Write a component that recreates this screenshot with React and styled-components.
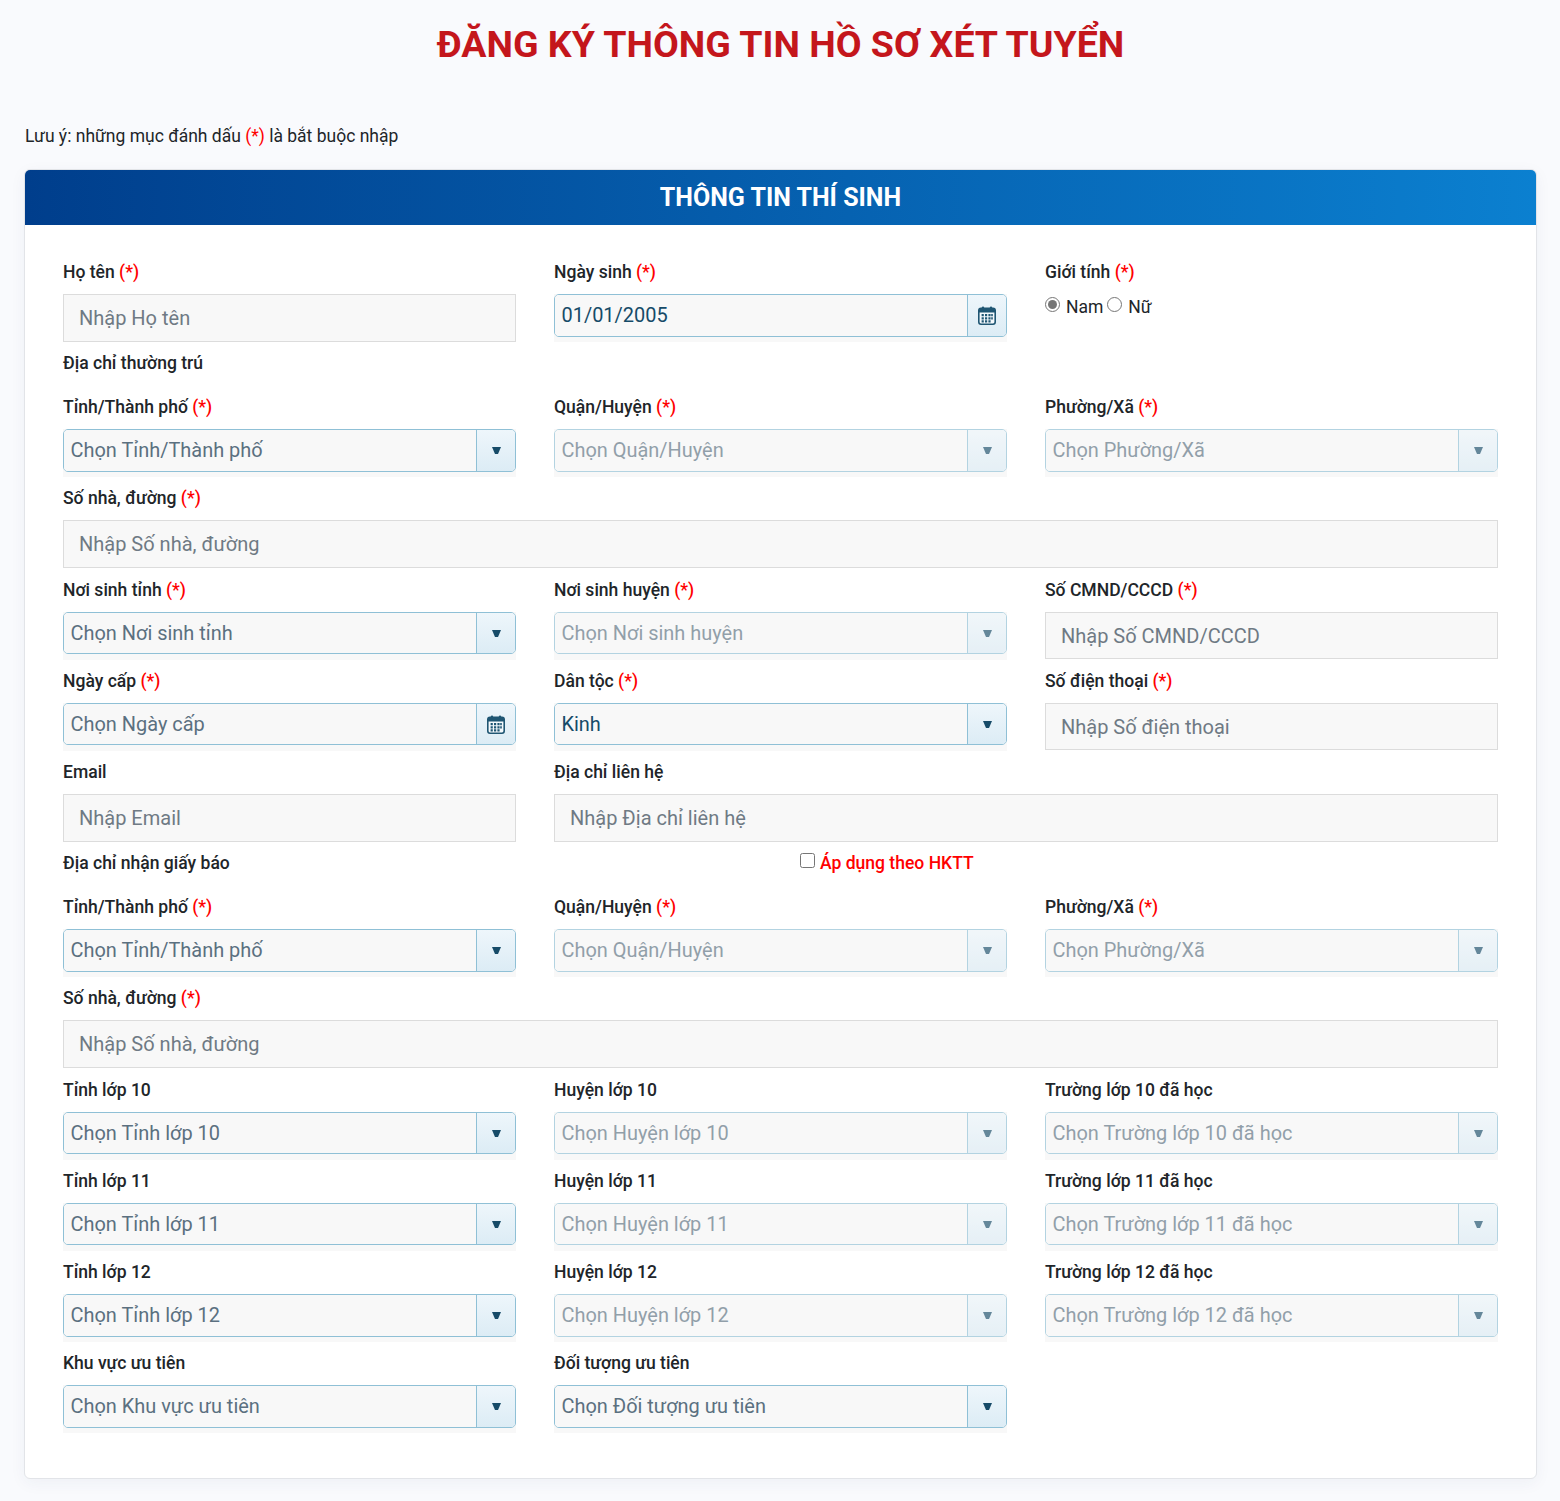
import React from "react";
import styled, { createGlobalStyle } from "styled-components";

const Global = createGlobalStyle`
  html, body { margin: 0; padding: 0; background: #f9fafd; }
  body { font-family: Roboto, "Noto Sans", sans-serif; color: #212529; }
  * { box-sizing: border-box; }
`;
const Page = styled.div`
  padding: 0 23px 21px 24px;
`;
const Title = styled.h1`
  margin: 0;
  padding-top: 19px;
  height: 122px;
  text-align: center;
  font-size: 37.5px;
  line-height: 50px;
  font-weight: 700;
  color: #c4161c;
`;
const Note = styled.p`
  margin: 0 0 19px 1px;
  height: 28px;
  font-size: 17.5px;
  line-height: 28px;
`;
const Req = styled.span`
  color: #f00;
`;
const Card = styled.section`
  background: #fff;
  border: 1px solid #e2e4e8;
  border-radius: 6px;
  box-shadow: 0 4px 16px rgba(40, 60, 100, 0.05);
  overflow: hidden;
`;
const CardHead = styled.h2`
  margin: 0;
  height: 55px;
  background: linear-gradient(90deg, #003e8c 0%, #0b80d0 100%);
  color: #fff;
  text-align: center;
  font-size: 25px;
  line-height: 56px;
  font-weight: 700;
`;
const Grid = styled.div`
  display: grid;
  grid-template-columns: repeat(3, 453px);
  column-gap: 38px;
  padding: 36px 38px 35px;
`;
const Field = styled.div`
  grid-column: span ${(p) => p.$span || 1};
  padding-bottom: ${(p) => (p.$wide ? 11 : 10)}px;
`;
const Label = styled.div`
  height: 22px;
  margin-bottom: 11px;
  font-size: 17.55px;
  line-height: 22px;
  font-weight: 500;
  white-space: nowrap;
`;
const Heading = styled.div`
  grid-column: span ${(p) => p.$span || 1};
  height: 44px;
  font-size: 17.55px;
  line-height: 22px;
  font-weight: 500;
  white-space: nowrap;
`;
const TextInput = styled.div`
  height: ${(p) => (p.$compact ? 47 : 48)}px;
  padding: 0 15px;
  background: #f8f8f8;
  border: 1px solid #dcdcdc;
  font-size: 20px;
  line-height: 46px;
  color: #6f7a84;
  white-space: nowrap;
`;
const Wrap = styled.div`
  height: 48px;
  background: #f8f8f8;
`;
const Combo = styled.div`
  display: flex;
  height: ${(p) => (p.$compact ? 42 : 43)}px;
  border: 1px solid #8fc0d6;
  border-radius: 5px;
  overflow: hidden;
  opacity: ${(p) => (p.$disabled ? 0.65 : 1)};
`;
const ComboText = styled.div`
  flex: 1;
  padding-left: 6.5px;
  background: #f8f8f8;
  font-size: 19.95px;
  line-height: 41px;
  color: ${(p) => (p.$value ? "#164b68" : "#5b7080")};
  white-space: nowrap;
`;
const ComboBtn = styled.div`
  display: flex;
  align-items: center;
  justify-content: center;
  width: 39px;
  border-left: 1px solid #8fc0d6;
  background: linear-gradient(180deg, #eef6fb 0%, #dcecf5 100%);
`;
const Options = styled.div`
  display: flex;
  align-items: center;
  height: 24px;
  padding-top: 2px;
  font-size: 17.5px;
  line-height: 22px;
`;
const Radio = styled.input`
  width: 15px;
  height: 15px;
  margin: 0 6px 6px 0;
  accent-color: #767676;
`;
const RadioText = styled.label`
  margin-right: 4px;
`;
const Apply = styled.label`
  grid-column: span 2;
  display: flex;
  align-items: flex-start;
  height: 44px;
  padding-left: 246px;
  color: #f00;
  font-size: 17.55px;
  line-height: 22px;
  font-weight: 500;
  white-space: nowrap;
`;
const Check = styled.input`
  width: 15px;
  height: 15px;
  margin: 1px 5px 0 0;
`;

const Arrow = () => (
  <svg width="9" height="7" viewBox="0 0 9 7"><path d="M0 0h9L6 7H3z" fill="#164b68" /></svg>
);
const CalendarIcon = () => (
  <svg width="18" height="19" viewBox="0 0 18 19">
    <rect x="0.8" y="2.2" width="16.4" height="16" rx="2.2" fill="#f4f9fc" stroke="#1f5673" strokeWidth="1.6" />
    <path d="M1 4a2 2 0 0 1 2-2h12a2 2 0 0 1 2 2v2.5H1z" fill="#1f5673" />
    <rect x="4" y="0.4" width="2" height="3.6" rx="0.8" fill="#1f5673" />
    <rect x="12" y="0.4" width="2" height="3.6" rx="0.8" fill="#1f5673" />
    <path d="M3.6 8h2.2v2.2H3.6zM7 8h2.2v2.2H7zM10.4 8h2.2v2.2h-2.2zM13.2 8h1.6v2.2h-1.6zM3.6 11.2h2.2v2.2H3.6zM7 11.2h2.2v2.2H7zM10.4 11.2h2.2v2.2h-2.2zM13.2 11.2h1.6v2.2h-1.6zM3.6 14.2h2.2v2.2H3.6zM7 14.2h2.2v2.2H7zM10.4 14.2h2.2v2.2h-2.2z" fill="#1f5673" />
  </svg>
);

const FieldLabel = ({ text, req }) => (
  <Label>{text}{req && <> <Req>(*)</Req></>}</Label>
);
const InputField = ({ label, req, span, wide, compact, placeholder }) => (
  <Field $span={span} $wide={wide}>
    <FieldLabel text={label} req={req} />
    <TextInput $compact={compact}>{placeholder}</TextInput>
  </Field>
);
const ComboField = ({ label, req, text, value, disabled, calendar, compact }) => (
  <Field>
    <FieldLabel text={label} req={req} />
    <Wrap>
      <Combo $disabled={disabled} $compact={compact}>
        <ComboText $value={value}>{text}</ComboText>
        <ComboBtn>{calendar ? <CalendarIcon /> : <Arrow />}</ComboBtn>
      </Combo>
    </Wrap>
  </Field>
);

const AddressRows = () => (
  <>
    <ComboField label="Tỉnh/Thành phố" req text="Chọn Tỉnh/Thành phố" />
    <ComboField label="Quận/Huyện" req text="Chọn Quận/Huyện" disabled />
    <ComboField label="Phường/Xã" req text="Chọn Phường/Xã" disabled />
    <InputField label="Số nhà, đường" req span={3} wide placeholder="Nhập Số nhà, đường" />
  </>
);
const SchoolRow = ({ n, compact }) => (
  <>
    <ComboField compact={compact} label={`Tỉnh lớp ${n}`} text={`Chọn Tỉnh lớp ${n}`} />
    <ComboField compact={compact} label={`Huyện lớp ${n}`} text={`Chọn Huyện lớp ${n}`} disabled />
    <ComboField compact={compact} label={`Trường lớp ${n} đã học`} text={`Chọn Trường lớp ${n} đã học`} disabled />
  </>
);

export default function App() {
  return (
    <Page>
      <Global />
      <Title>ĐĂNG KÝ THÔNG TIN HỒ SƠ XÉT TUYỂN</Title>
      <Note>Lưu ý: những mục đánh dấu <Req>(*)</Req> là bắt buộc nhập</Note>
      <Card>
        <CardHead>THÔNG TIN THÍ SINH</CardHead>
        <Grid>
          <InputField label="Họ tên" req placeholder="Nhập Họ tên" />
          <ComboField label="Ngày sinh" req text="01/01/2005" value calendar />
          <Field>
            <FieldLabel text="Giới tính" req />
            <Options>
              <Radio type="radio" name="gender" defaultChecked />
              <RadioText>Nam</RadioText>
              <Radio type="radio" name="gender" />
              <RadioText>Nữ</RadioText>
            </Options>
          </Field>
          <Heading $span={3}>Địa chỉ thường trú</Heading>
          <AddressRows />
          <ComboField compact label="Nơi sinh tỉnh" req text="Chọn Nơi sinh tỉnh" />
          <ComboField compact label="Nơi sinh huyện" req text="Chọn Nơi sinh huyện" disabled />
          <InputField compact label="Số CMND/CCCD" req placeholder="Nhập Số CMND/CCCD" />
          <ComboField compact label="Ngày cấp" req text="Chọn Ngày cấp" calendar />
          <ComboField compact label="Dân tộc" req text="Kinh" value />
          <InputField compact label="Số điện thoại" req placeholder="Nhập Số điện thoại" />
          <InputField label="Email" placeholder="Nhập Email" />
          <InputField label="Địa chỉ liên hệ" span={2} placeholder="Nhập Địa chỉ liên hệ" />
          <Heading>Địa chỉ nhận giấy báo</Heading>
          <Apply><Check type="checkbox" />Áp dụng theo HKTT</Apply>
          <AddressRows />
          <SchoolRow n={10} compact />
          <SchoolRow n={11} compact />
          <SchoolRow n={12} />
          <ComboField label="Khu vực ưu tiên" text="Chọn Khu vực ưu tiên" />
          <ComboField label="Đối tượng ưu tiên" text="Chọn Đối tượng ưu tiên" />
        </Grid>
      </Card>
    </Page>
  );
}
